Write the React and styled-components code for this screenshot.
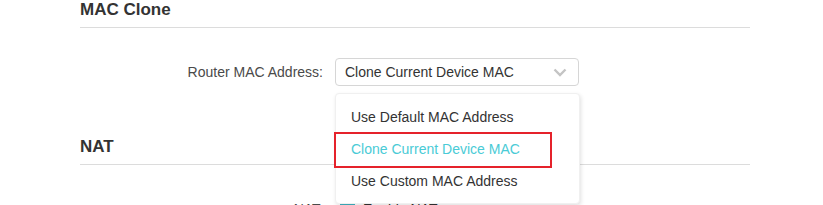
import React from "react";
import styled, { createGlobalStyle } from "styled-components";

const GlobalStyle = createGlobalStyle`
  body {
    margin: 0;
    background: #fff;
    font-family: "Liberation Sans", Arial, sans-serif;
    color: #333;
  }
`;

const Page = styled.div`
  width: 670px;
  padding-left: 80px;
`;

const Section = styled.section`
  margin-bottom: ${(p) => p.$gap || 0}px;
`;

const Title = styled.h2`
  margin: 0;
  font-size: 17px;
  line-height: 20px;
  font-weight: bold;
  color: #333;
  padding-bottom: 7px;
  border-bottom: 1px solid #dcdcdc;
`;

const Row = styled.div`
  display: flex;
  align-items: center;
  margin-top: 30px;
  height: 28px;
`;

const Label = styled.div`
  width: 243px;
  margin-right: 12px;
  text-align: right;
  font-size: 14px;
  color: #4a4a4a;
`;

const SelectWrap = styled.div`
  position: relative;
`;

const SelectBox = styled.div`
  box-sizing: border-box;
  width: 244px;
  height: 28px;
  border: 1px solid #d6d6d6;
  border-radius: 4px;
  display: flex;
  align-items: center;
  justify-content: space-between;
  padding: 0 11px 0 9px;
  font-size: 14px;
  color: #333;
`;

const Menu = styled.ul`
  position: absolute;
  top: 35px;
  left: 0;
  box-sizing: border-box;
  width: 245px;
  margin: 0;
  padding: 7px 0 6px;
  list-style: none;
  background: #fff;
  border-radius: 4px;
  border: 1px solid #f0f0f0;
  box-shadow: 1px 2px 4px rgba(0, 0, 0, 0.12);
  z-index: 2;
`;

const Item = styled.li`
  height: 32px;
  line-height: 32px;
  padding-left: 15px;
  font-size: 14px;
  color: ${(p) => (p.$active ? "#4acbd6" : "#333")};
`;

const Highlight = styled.div`
  position: absolute;
  left: -2px;
  top: 38px;
  width: 218px;
  height: 36px;
  box-sizing: border-box;
  border: 2px solid #e5222b;
  pointer-events: none;
`;

const Check = styled.span`
  display: inline-flex;
  align-items: center;
  justify-content: center;
  width: 15px;
  height: 15px;
  border-radius: 2px;
  background: #3fb5c4;
  margin: 0 8px 0 5px;
`;

const CheckText = styled.span`
  font-size: 14px;
  color: #333;
`;

const Chevron = () => (
  <svg width="14" height="9" viewBox="0 0 14 9">
    <path d="M1.5 1.5 L7 7 L12.5 1.5" fill="none" stroke="#c4c4c4" strokeWidth="2.4" />
  </svg>
);

export default function App() {
  const options = ["Use Default MAC Address", "Clone Current Device MAC", "Use Custom MAC Address"];
  const selected = 1;

  return (
    <>
      <GlobalStyle />
      <Page>
        <Section $gap={51}>
          <Title>MAC Clone</Title>
          <Row>
            <Label>Router MAC Address:</Label>
            <SelectWrap>
              <SelectBox>
                <span>{options[selected]}</span>
                <Chevron />
              </SelectBox>
              <Menu>
                {options.map((o, i) => (
                  <Item key={o} $active={i === selected}>{o}</Item>
                ))}
                <Highlight />
              </Menu>
            </SelectWrap>
          </Row>
        </Section>
        <Section>
          <Title>NAT</Title>
          <Row>
            <Label>NAT:</Label>
            <Check>
              <svg width="9" height="7" viewBox="0 0 9 7">
                <path d="M1 3.5 L3.5 6 L8 1" fill="none" stroke="#fff" strokeWidth="1.6" />
              </svg>
            </Check>
            <CheckText>Enable NAT</CheckText>
          </Row>
        </Section>
      </Page>
    </>
  );
}
